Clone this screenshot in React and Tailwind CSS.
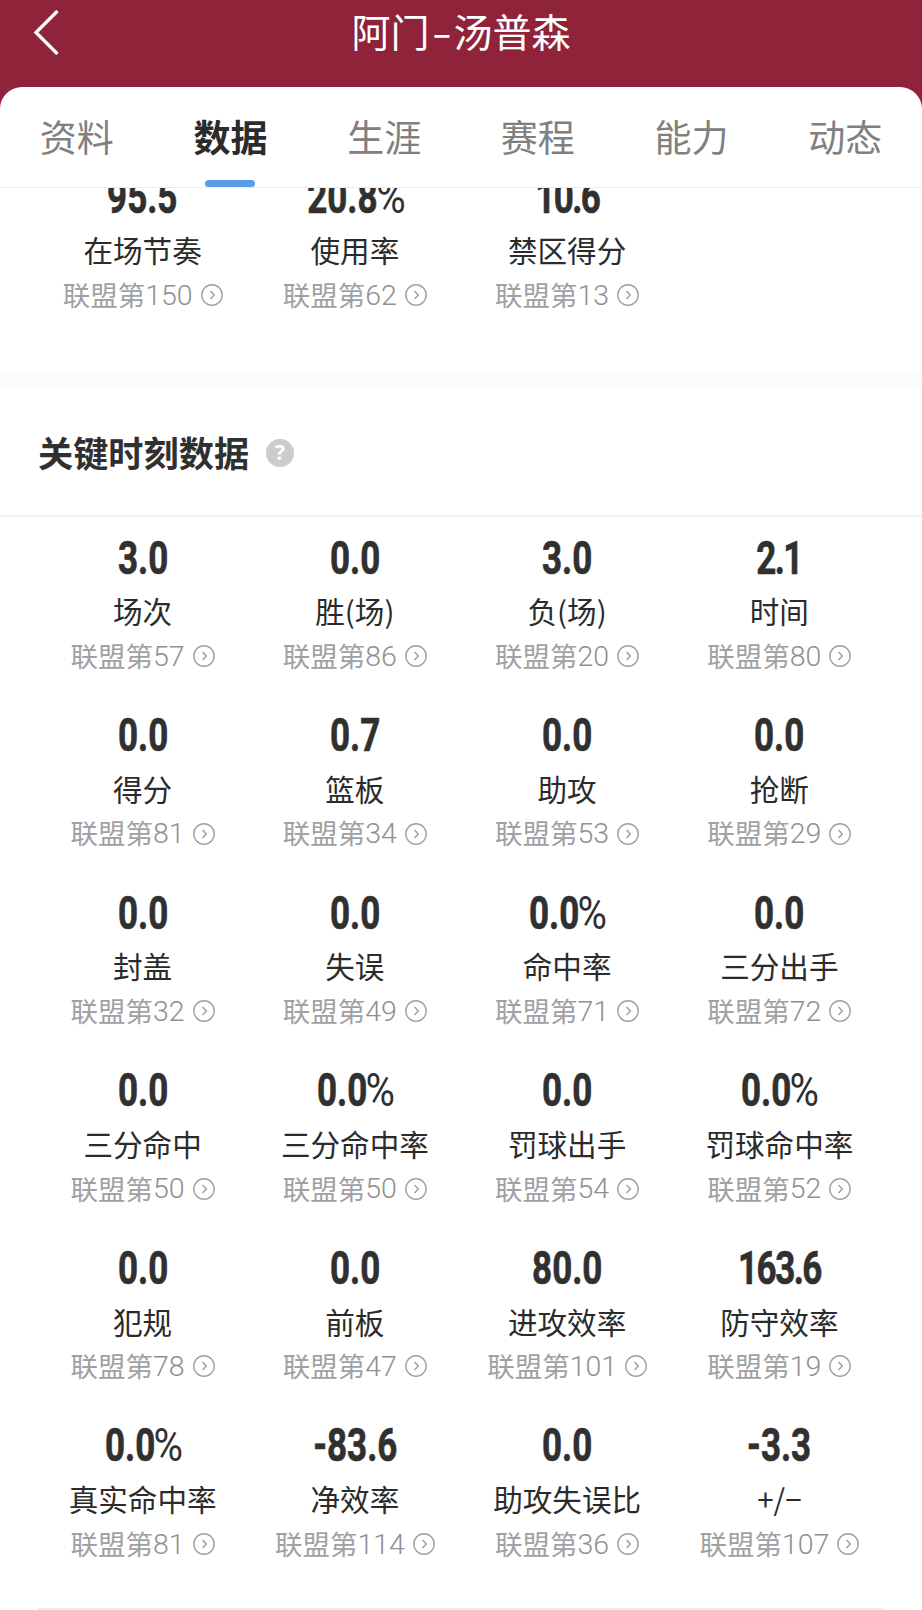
import { useState } from "react";

const tabs = ["资料", "数据", "生涯", "赛程", "能力", "动态"];

const onCourtStats = [
    { value: "95.5", label: "在场节奏", rank: 150 },
    { value: "20.8%", label: "使用率", rank: 62 },
    { value: "10.6", label: "禁区得分", rank: 13 },
];

const clutchStats = [
    { value: "3.0", label: "场次", rank: 57 },
    { value: "0.0", label: "胜(场)", rank: 86 },
    { value: "3.0", label: "负(场)", rank: 20 },
    { value: "2.1", label: "时间", rank: 80 },
    { value: "0.0", label: "得分", rank: 81 },
    { value: "0.7", label: "篮板", rank: 34 },
    { value: "0.0", label: "助攻", rank: 53 },
    { value: "0.0", label: "抢断", rank: 29 },
    { value: "0.0", label: "封盖", rank: 32 },
    { value: "0.0", label: "失误", rank: 49 },
    { value: "0.0%", label: "命中率", rank: 71 },
    { value: "0.0", label: "三分出手", rank: 72 },
    { value: "0.0", label: "三分命中", rank: 50 },
    { value: "0.0%", label: "三分命中率", rank: 50 },
    { value: "0.0", label: "罚球出手", rank: 54 },
    { value: "0.0%", label: "罚球命中率", rank: 52 },
    { value: "0.0", label: "犯规", rank: 78 },
    { value: "0.0", label: "前板", rank: 47 },
    { value: "80.0", label: "进攻效率", rank: 101 },
    { value: "163.6", label: "防守效率", rank: 19 },
    { value: "0.0%", label: "真实命中率", rank: 81 },
    { value: "-83.6", label: "净效率", rank: 114 },
    { value: "0.0", label: "助攻失误比", rank: 36 },
    { value: "-3.3", label: "+/−", rank: 107 },
];

function StatCell({ value, label, rank }) {
    const isPercent = value.endsWith("%");
    const number = isPercent ? value.slice(0, -1) : value;

    return (
        <div className="flex flex-col items-center whitespace-nowrap">
            <div className="h-[60px] pt-[3px] flex items-center scale-x-[0.76] font-['Roboto'] text-[46px] font-bold text-[#303030]">
                <span className={number.includes("1") ? "tracking-[-2px] [-webkit-text-stroke:0.7px_#303030]" : "[-webkit-text-stroke:0.7px_#303030]"}>
                    {number}
                </span>
                {isPercent && <span className="font-normal origin-left scale-x-115 -ml-0.5 mr-0.5">%</span>}
            </div>
            <div className="h-[50px] mb-0.5 flex items-center text-[29.6px] text-[#2b2b2b]">
                {label}
            </div>
            <div className="h-9 flex items-center text-[27.5px] text-[#a0a1a3]">
                <span className="-mt-0.5">联盟第</span>
                <span className="mt-px font-['Roboto'] text-[28.5px] font-light text-[#8f9092]">{rank}</span>
                <svg className="ml-2 -mt-px size-[22px]" viewBox="0 0 22 22" fill="none" stroke="currentColor">
                    <circle cx="11" cy="11" r="10.2" strokeWidth="1.4" />
                    <path d="M9.5 7 L13.3 11 L9.5 15" strokeWidth="1.5" />
                </svg>
            </div>
        </div>
    );
}

export default function App() {
    const [activeTab, setActiveTab] = useState("数据");

    return (
        <div className="h-[1610px] w-[922px] overflow-hidden bg-[#8e2339] font-['Noto_Sans_CJK_SC',sans-serif]">

            {/* HEADER */}
            <header className="h-[87px] grid grid-cols-[120px_1fr_120px]">
                <button className="pl-[33px] pt-[10px] self-start text-white">
                    <svg className="h-[45px] w-[26px]" viewBox="0 0 26 45" fill="none" stroke="currentColor" strokeWidth="3.4">
                        <path d="M24.5 1 L3 22.5 L24.5 44" />
                    </svg>
                </button>
                <h1 className="h-[60px] flex items-center justify-center text-[39px] text-white">
                    <span>阿门</span>
                    <span className="w-[24px] text-center scale-x-150">-</span>
                    <span>汤普森</span>
                </h1>
            </header>

            <main className="h-[1523px] flex flex-col rounded-t-[22px] bg-white">

                {/* TABS */}
                <nav className="h-[101px] shrink-0 grid grid-cols-6 border-b border-[#ededed]">
                    {tabs.map((tab) => (
                        <button
                            key={tab}
                            onClick={() => setActiveTab(tab)}
                            className="flex flex-col items-center"
                        >
                            <span
                                className={
                                    activeTab === tab
                                        ? "h-[93px] pt-[7px] flex items-center text-[37px] font-bold text-[#2b2b2b]"
                                        : "h-[93px] pt-[7px] flex items-center text-[37px] text-[#808080]"
                                }
                            >
                                {tab}
                            </span>
                            {activeTab === tab && (
                                <span className="h-[7px] w-[50px] rounded-full bg-[#5b9be8]" />
                            )}
                        </button>
                    ))}
                </nav>

                {/* ON COURT STATS, scrolled under the tabs */}
                <section className="h-[182px] shrink-0 overflow-hidden px-[36.5px]">
                    <div className="-mt-[22.5px] grid grid-cols-4">
                        {onCourtStats.map((stat) => (
                            <StatCell key={stat.label} {...stat} />
                        ))}
                    </div>
                </section>

                <div className="h-[18px] shrink-0 bg-[#fafcfe]" />

                {/* CLUTCH STATS */}
                <section className="flex flex-1 flex-col">
                    <div className="h-[129px] shrink-0 flex items-center border-b-2 border-[#f1f1f1] pl-[38px] pt-0.5">
                        <h2 className="text-[35.2px] font-bold text-[#303030]">关键时刻数据</h2>
                        <span className="ml-[17px] size-7 flex items-center justify-center rounded-full bg-[#cccccc] font-['Open_Sans'] text-[21px] font-bold text-white">
                            ?
                        </span>
                    </div>
                    <div className="px-[36.5px] pt-[9.5px] grid grid-cols-4 gap-y-[29.6px]">
                        {clutchStats.map((stat) => (
                            <StatCell key={stat.label} {...stat} />
                        ))}
                    </div>
                    <div className="mx-[38px] mt-auto h-0.5 bg-[#ededed]" />
                </section>
            </main>
        </div>
    );
}
